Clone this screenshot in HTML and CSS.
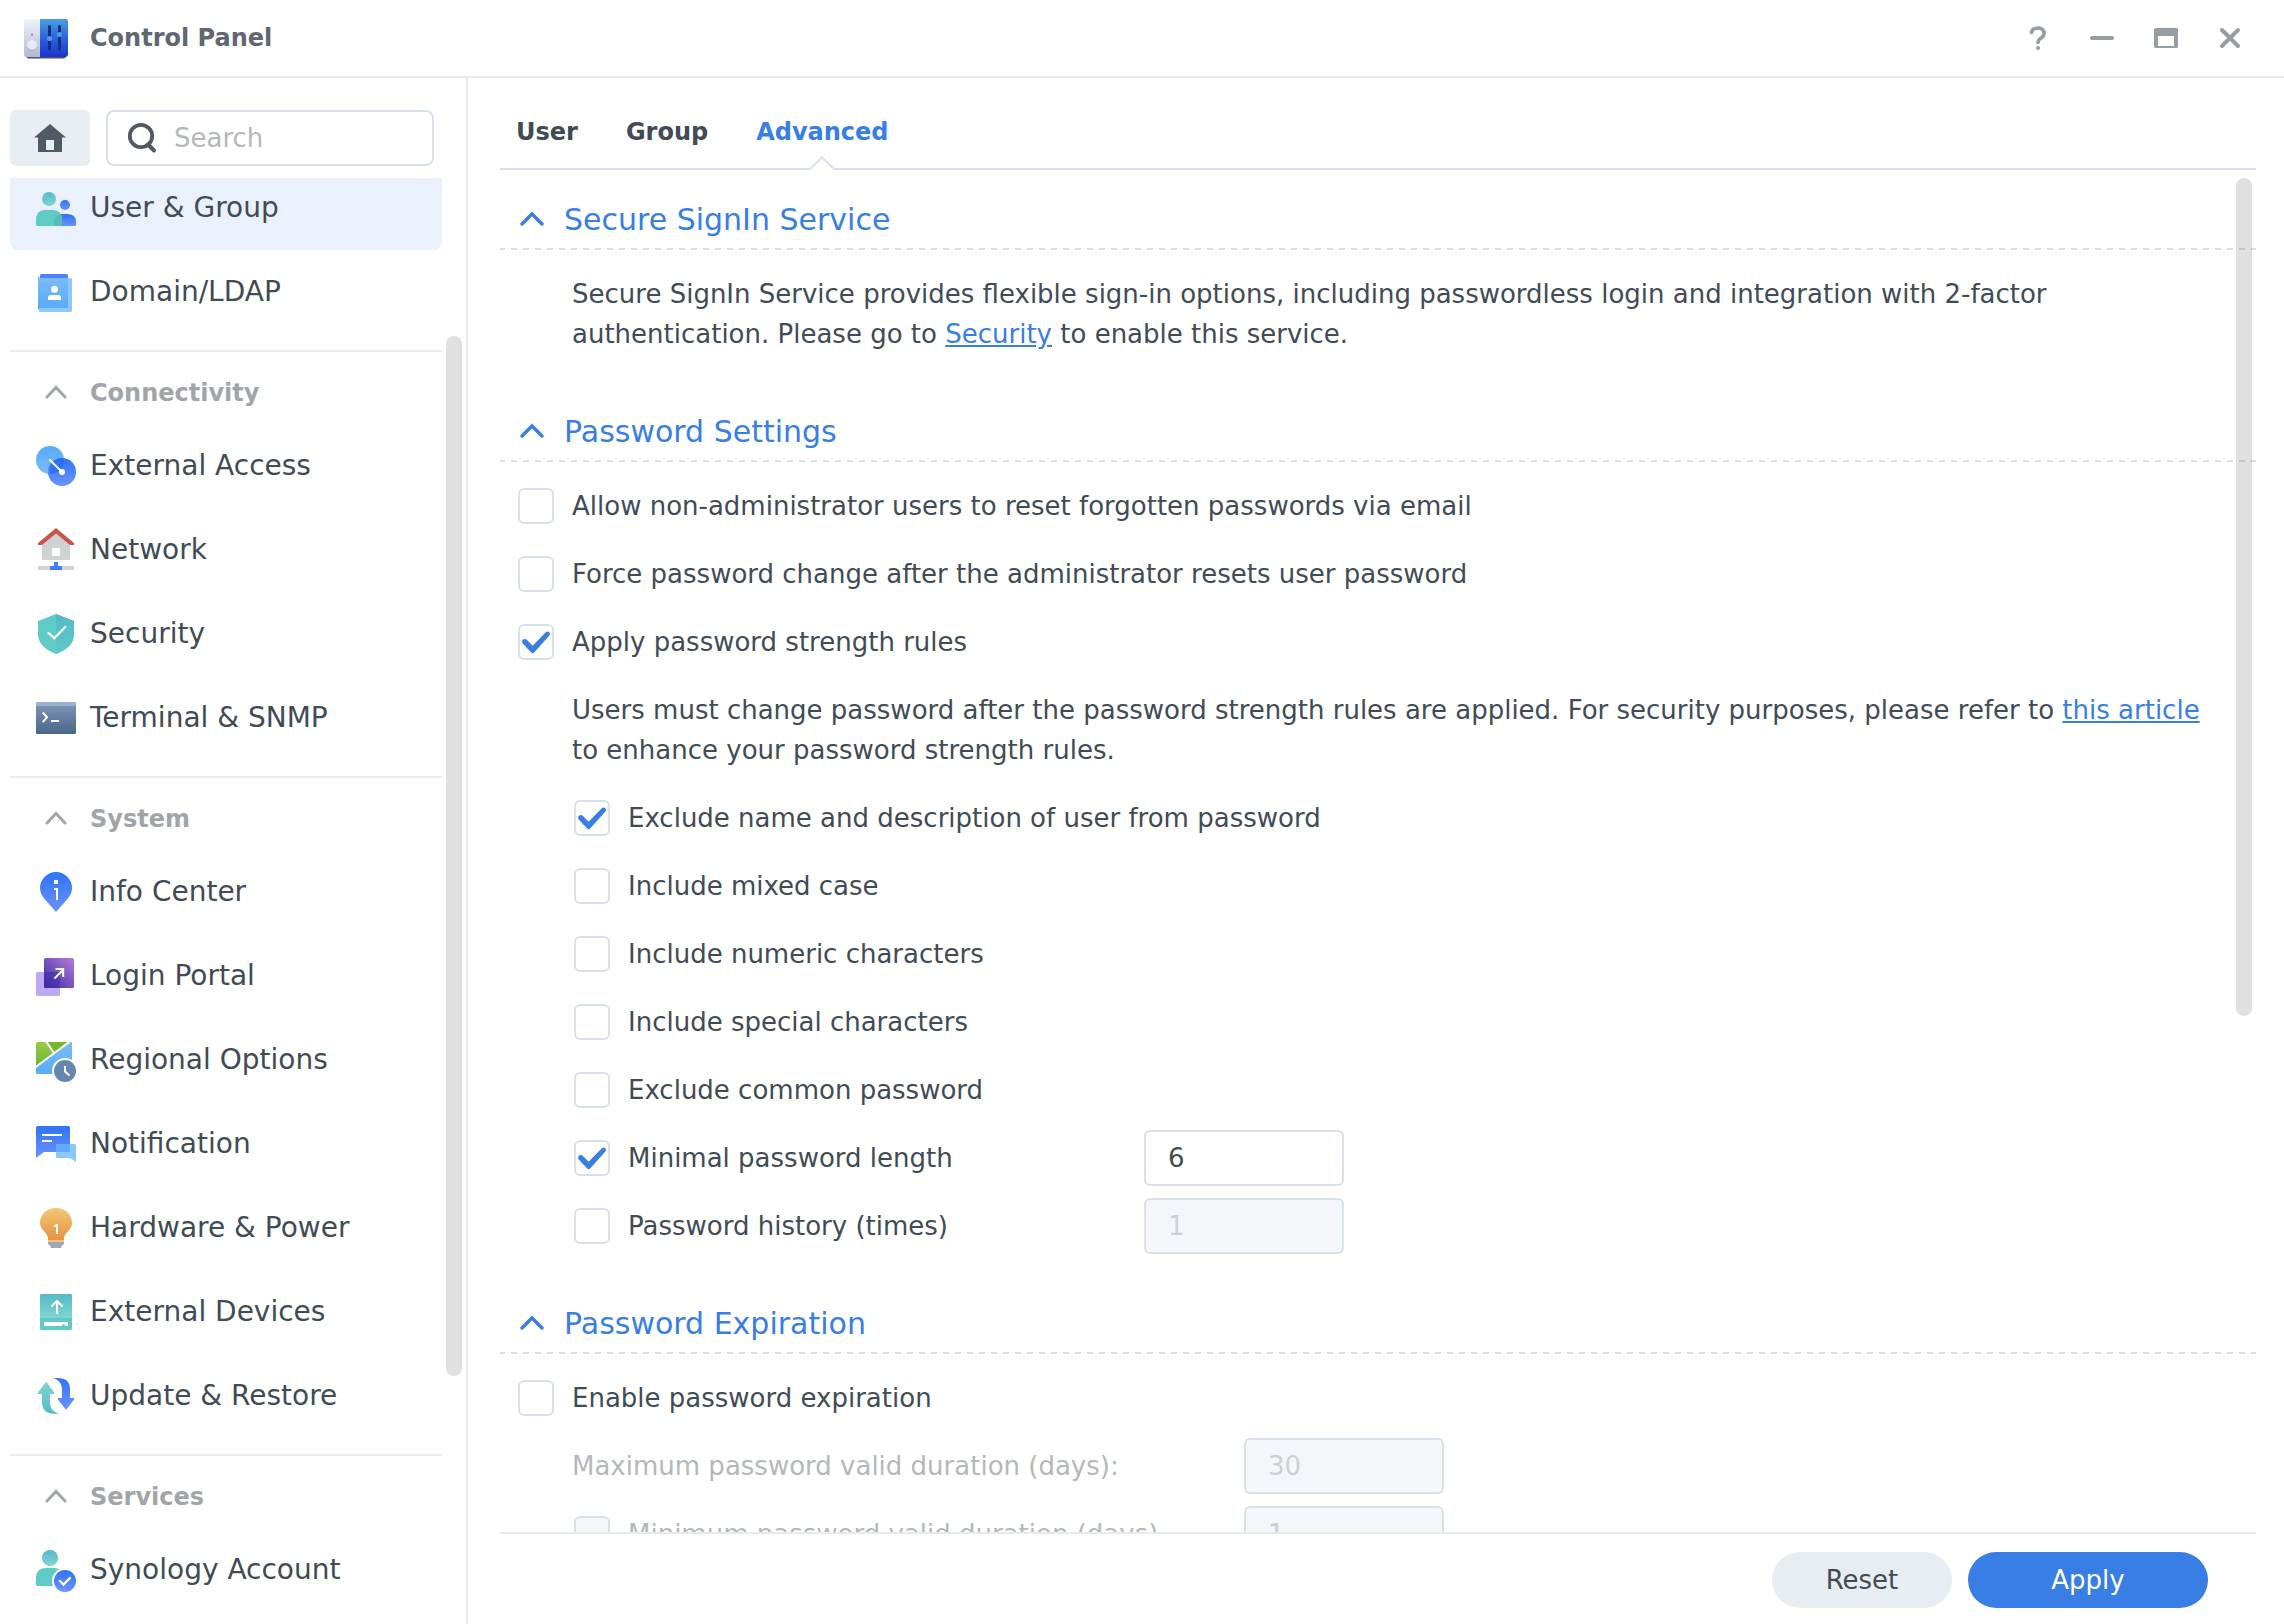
FILE: index.html
```
<!DOCTYPE html>
<html lang="en">
<head>
  <meta charset="UTF-8" />
  <meta name="viewport" content="width=device-width, initial-scale=1.0"/>
  <title>Control Panel</title>
  <link rel="stylesheet" href="styles.css">
</head>
<body>

  <!-- shared gradients -->
  <svg class="defs" aria-hidden="true">
    <defs>
      <linearGradient id="blue" x1="0" y1="0" x2="0" y2="1"><stop offset="0" stop-color="#2e74f8"/><stop offset="1" stop-color="#6b93ff"/></linearGradient>
      <linearGradient id="sky" x1="0" y1="0" x2="0" y2="1"><stop offset="0" stop-color="#7cbcf8"/><stop offset="1" stop-color="#56abf8"/></linearGradient>
      <linearGradient id="sky-up" x1="0" y1="0" x2="0" y2="1"><stop offset="0" stop-color="#56abf8"/><stop offset="1" stop-color="#7cbcf8"/></linearGradient>
      <linearGradient id="teal" x1="0" y1="0" x2="0" y2="1"><stop offset="0" stop-color="#55b9c9"/><stop offset="1" stop-color="#80d5d0"/></linearGradient>
      <linearGradient id="teal-up" x1="0" y1="0" x2="0" y2="1"><stop offset="0" stop-color="#80d5d0"/><stop offset="1" stop-color="#55b9c9"/></linearGradient>
      <linearGradient id="teal-half" x1="0" y1="0" x2="0" y2="1"><stop offset="0" stop-color="#55b9c9"/><stop offset="1" stop-color="#60cac6"/></linearGradient>
      <linearGradient id="slate" x1="0" y1="0" x2="0" y2="1"><stop offset="0" stop-color="#8197b9"/><stop offset="1" stop-color="#496689"/></linearGradient>
      <linearGradient id="purple" x1="0" y1="1" x2="1" y2="0"><stop offset="0" stop-color="#3c2ca0"/><stop offset="1" stop-color="#b57bd8"/></linearGradient>
      <linearGradient id="green" x1="0" y1="0" x2="0" y2="1"><stop offset="0" stop-color="#9acb45"/><stop offset="1" stop-color="#63b53a"/></linearGradient>
      <linearGradient id="orange" x1="0" y1="0" x2="0" y2="1"><stop offset="0" stop-color="#f0c774"/><stop offset="1" stop-color="#e98f3c"/></linearGradient>
      <linearGradient id="panel-white" x1="0" y1="0" x2="0" y2="1"><stop offset="0" stop-color="#f0f2fb"/><stop offset="1" stop-color="#b4b8d4"/></linearGradient>
      <linearGradient id="panel-blue" x1="0" y1="0" x2="0" y2="1"><stop offset="0" stop-color="#4a9ee4"/><stop offset=".4" stop-color="#2f6fdc"/><stop offset="1" stop-color="#1b33cf"/></linearGradient>
    </defs>
  </svg>

  <!-- title bar -->
  <header class="titlebar">
    <svg class="app-icon" viewBox="0 0 44 44" aria-hidden="true">
      <rect x="2" y="8" width="40" height="34.500" rx="3" fill="#4f5260"/>
      <path d="M2 3H16V41H3Q0 41 0 38V5Q0 3 2 3Z" fill="url(#panel-white)"/>
      <path d="M16 3H42Q44 3 44 5V38Q44 41 41 41H16Z" fill="url(#panel-blue)"/>
      <circle cx="8" cy="18.800" r="1" fill="#7d8496"/>
      <circle cx="8" cy="30" r="5" fill="#a3a6c3"/>
      <circle cx="8" cy="29" r="5" fill="#e7e9fa"/>
      <path d="M25.500 10.500V33M35.500 10.500V33" stroke="#152f7c" stroke-width="3" stroke-linecap="round"/>
      <circle cx="25.500" cy="22.500" r="2.600" fill="#4e97f2"/>
      <circle cx="35.500" cy="18.500" r="2.600" fill="#4e97f2"/>
    </svg>
    <h1>Control Panel</h1>
    <div class="window-tools">
      <button type="button" aria-label="Help"><svg viewBox="0 0 24 24"><path d="M5.500 6.500Q6.500 2 12 2Q18 2.300 18 7.500Q18 10.500 14.500 12.500Q12 14 12 16.500" fill="none" stroke="currentColor" stroke-width="3.600" stroke-linecap="round"/><circle cx="12" cy="22" r="2" fill="currentColor"/></svg></button>
      <button type="button" aria-label="Minimize"><svg viewBox="0 0 24 24"><rect y="10" width="24" height="4" rx="2" fill="currentColor"/></svg></button>
      <button type="button" aria-label="Maximize"><svg viewBox="0 0 24 24"><path d="M1.500 2H22.500Q24 2 24 3.500V20.500Q24 22 22.500 22H1.500Q0 22 0 20.500V3.500Q0 2 1.500 2ZM4 10V20H20V10Z" fill="currentColor" fill-rule="evenodd"/></svg></button>
      <button type="button" aria-label="Close"><svg viewBox="0 0 24 24"><path d="M4 4L20 20M20 4L4 20" stroke="currentColor" stroke-width="4" stroke-linecap="round"/></svg></button>
    </div>
  </header>

  <div class="window-body">

    <!-- sidebar -->
    <aside class="sidebar">
      <div class="sidebar-top">
        <button type="button" class="home-btn" aria-label="Home">
          <svg viewBox="0 0 32 32"><path d="M16 2L32 15.500H28V30H4V15.500H0ZM12 18V28H20V18Z" fill="currentColor" fill-rule="evenodd"/></svg>
        </button>
        <div class="search-box">
          <svg viewBox="0 0 32 32" aria-hidden="true"><circle cx="15" cy="14" r="11.200" fill="none" stroke="currentColor" stroke-width="3.800"/><path d="M22 22.500L28 28.500" stroke="currentColor" stroke-width="4" stroke-linecap="round"/></svg>
          <input type="text" placeholder="Search" aria-label="Search">
        </div>
      </div>

      <nav class="nav">
        <div class="nav-list">
          <a class="nav-item active" href="#">
            <svg viewBox="0 0 48 48"><circle cx="33" cy="21" r="5" fill="url(#blue)"/><path d="M22 30H36Q44 30.500 44 38V40.500Q44 42 42.500 42H22Z" fill="url(#blue)"/><circle cx="17" cy="15" r="7" fill="url(#teal)"/><path d="M4 36Q4 26 13 26H21Q30 26 30 36V42H5.500Q4 42 4 40.500Z" fill="#60cac6"/><path d="M30 42H22V38Q22 31 29 30Q30 32 30 36Z" fill="#58bbb9"/></svg>
            User &amp; Group
          </a>
          <a class="nav-item" href="#">
            <svg viewBox="0 0 48 48"><rect x="7" y="10" width="33" height="34" rx="1.500" fill="#90c8fb"/><rect x="8" y="6" width="28" height="6" rx="1.500" fill="#4a80fa"/><path d="M6 8L8 10H36V40H8L6 42Z" fill="url(#sky)"/><circle cx="22.500" cy="21.300" r="3.500" fill="#fff"/><path d="M16 32V30Q16 27 19 27H26Q29 27 29 30V32Z" fill="#fff"/></svg>
            Domain/LDAP
          </a>

          <div class="nav-group">
            <h2><svg viewBox="0 0 48 48"><path d="M15 28L24 18.500L33 28" fill="none" stroke="currentColor" stroke-width="3" stroke-linecap="round"/></svg>Connectivity</h2>
            <a class="nav-item" href="#">
              <svg viewBox="0 0 48 48"><circle cx="18" cy="18" r="14" fill="url(#sky-up)"/><circle cx="30" cy="30" r="14" fill="url(#blue)"/><path d="M32 18A14 14 0 0 1 18 32A14 14 0 0 1 30 16Q32 16 32 18Z" fill="#2668f0" opacity=".7"/><path d="M18 18L30 30" stroke="#fff" stroke-width="2" stroke-linecap="round"/><circle cx="30" cy="30" r="3" fill="#fff"/></svg>
              External Access
            </a>
            <a class="nav-item" href="#">
              <svg viewBox="0 0 48 48"><path d="M24 7L38 18V32.500Q38 34 36.500 34H11.500Q10 34 10 32.500V18ZM20 30H28V23Q28 22 27 22H21Q20 22 20 23Z" fill="#cfd1d4" fill-rule="evenodd"/><path d="M24 2L42 17V19H38L24 7.500L10 19H6V17Z" fill="#c6564c"/><path d="M6 40H42V44H6Z" fill="#d0d4d8"/><path d="M22 36H26V40H30V44H18V40H22Z" fill="#3f7df5"/></svg>
              Network
            </a>
            <a class="nav-item" href="#">
              <svg viewBox="0 0 48 48"><path d="M24 4L42 11V24Q42 37 24 44Q6 37 6 24V11Z" fill="#60cac6"/><path d="M24 4L42 11V24Q42 37 24 44Z" fill="url(#teal-half)"/><path d="M16.500 23L22.300 28.300L33.300 17" fill="none" stroke="#fff" stroke-width="2.200" stroke-linecap="round"/></svg>
              Security
            </a>
            <a class="nav-item" href="#">
              <svg viewBox="0 0 48 48"><rect x="4" y="8" width="40" height="32" rx="1.500" fill="url(#slate)"/><path d="M5.500 8H42.500Q44 8 44 9.500V12H4V9.500Q4 8 5.500 8Z" fill="#9cb0cf"/><path d="M10.700 18.500L15 23.300L10.700 28.200" fill="none" stroke="#fff" stroke-width="2"/><path d="M19 27H27" stroke="#fff" stroke-width="2"/></svg>
              Terminal &amp; SNMP
            </a>
          </div>

          <div class="nav-group">
            <h2><svg viewBox="0 0 48 48"><path d="M15 28L24 18.500L33 28" fill="none" stroke="currentColor" stroke-width="3" stroke-linecap="round"/></svg>System</h2>
            <a class="nav-item" href="#">
              <svg viewBox="0 0 48 48"><path d="M24 4A16 16 0 0 1 40 20Q40 26 35 31.500L24 44L13 31.500Q8 26 8 20A16 16 0 0 1 24 4Z" fill="url(#blue)"/><path d="M22 12H26V16H22ZM22 20H26V32H24V22H22Z" fill="#fff"/></svg>
              Info Center
            </a>
            <a class="nav-item" href="#">
              <svg viewBox="0 0 48 48"><rect x="4" y="20" width="24" height="24" rx="1.500" fill="#bfaaf2"/><rect x="12" y="6" width="30" height="30" rx="1.500" fill="url(#purple)"/><path d="M12 20H28V36H13Q12 36 12 35Z" fill="#3326a0" opacity=".4"/><path d="M22.500 26.500L31 18M23.500 17H31.200V25" fill="none" stroke="#fff" stroke-width="2"/></svg>
              Login Portal
            </a>
            <a class="nav-item" href="#">
              <svg viewBox="0 0 48 48"><path d="M5 6H40L4 32V7Z" fill="url(#green)"/><path d="M14 6H36L22 17Z" fill="#77b52f"/><path d="M40 6V38H5.500Q4 38 4 36.500V31Z" fill="url(#sky)"/><path d="M3 31.500L38.500 5M13.500 4.500L22 17" stroke="#fff" stroke-width="2"/><circle cx="33" cy="35" r="13" fill="#fff"/><circle cx="33" cy="35" r="11" fill="#6686af"/><path d="M33 30V35.500L37.500 39.500" fill="none" stroke="#fff" stroke-width="2"/></svg>
              Regional Options
            </a>
            <a class="nav-item" href="#">
              <svg viewBox="0 0 48 48"><path d="M5.500 6H36.500Q38 6 38 7.500V30.500Q38 32 36.500 32H12L4 38V7.500Q4 6 5.500 6Z" fill="url(#blue)"/><path d="M10 15H30M10 21H20" stroke="#fff" stroke-width="2"/><path d="M25.500 24H42.500Q44 24 44 25.500V42L38 38H25.500Q24 38 24 36.500V25.500Q24 24 25.500 24Z" fill="#8cc7fb"/><path d="M25.500 24H38V31Q38 32 37 32H24V25.500Q24 24 25.500 24Z" fill="#63abf8"/></svg>
              Notification
            </a>
            <a class="nav-item" href="#">
              <svg viewBox="0 0 48 48"><path d="M24 4C33 4 40 10.500 40 19C40 26 32 29 32 34V38H16V34C16 29 8 26 8 19C8 10.500 15 4 24 4Z" fill="url(#orange)"/><path d="M16 36H32V38H16Z" fill="#f2c283"/><path d="M16 38H32V40L29.500 42V44H18.500V42L16 40Z" fill="#9ea8b3"/><path d="M22 22L24 20H26V30H24V23H22Z" fill="#fff"/></svg>
              Hardware &amp; Power
            </a>
            <a class="nav-item" href="#">
              <svg viewBox="0 0 48 48"><rect x="8" y="6" width="32" height="36" rx="1.500" fill="#60cac6"/><path d="M9.500 6H38.500Q40 6 40 7.500V30H8V7.500Q8 6 9.500 6Z" fill="url(#teal)"/><path d="M12 34H36V38H33V36.500H30V38H12Z" fill="#fff"/><path d="M25 26V13.500M19.500 18.500L25 13L30.500 18.500" fill="none" stroke="#fff" stroke-width="2"/></svg>
              External Devices
            </a>
            <a class="nav-item" href="#">
              <svg viewBox="0 0 48 48"><path d="M14.300 9.500L22 20.500V22H18V31Q18.500 39 26.500 41.500Q10 43.500 10 30V22H6V20.500Z" fill="url(#teal-up)"/><path d="M21.500 6.300Q38 4.500 38 17V26H42V27.500L34 38L26 27.500V26H30V17Q29.500 8.500 21.500 6.300Z" fill="url(#blue)"/></svg>
              Update &amp; Restore
            </a>
          </div>

          <div class="nav-group">
            <h2><svg viewBox="0 0 48 48"><path d="M15 28L24 18.500L33 28" fill="none" stroke="currentColor" stroke-width="3" stroke-linecap="round"/></svg>Services</h2>
            <a class="nav-item" href="#">
              <svg viewBox="0 0 48 48"><circle cx="18" cy="12" r="8" fill="url(#teal)"/><path d="M4 32Q4 22 14 22H22Q30 22 32 30V40H5.500Q4 40 4 38.500Z" fill="#60cac6"/><circle cx="33" cy="35" r="13" fill="#fff"/><circle cx="33" cy="35" r="11" fill="url(#blue)"/><path d="M28 35L31.500 38.500L38 32" fill="none" stroke="#fff" stroke-width="2.400" stroke-linecap="round"/></svg>
              Synology Account
            </a>
          </div>
        </div>
        <div class="scrollbar nav-scroll"></div>
      </nav>
    </aside>

    <!-- main area -->
    <main class="main">
      <div class="tabs">
        <button type="button" class="tab">User</button>
        <button type="button" class="tab">Group</button>
        <button type="button" class="tab active">Advanced<svg viewBox="0 0 26 14" aria-hidden="true"><path d="M0 14L13 1L26 14Z" fill="#fff"/><path d="M0 13H1L13 1.500L25 13H26" fill="none" stroke="#d8e1e9" stroke-width="2"/></svg></button>
      </div>

      <form class="settings" id="settings">
        <section>
          <h3><svg viewBox="0 0 24 24"><path d="M2 16L12 6L22 16" fill="none" stroke="currentColor" stroke-width="3.400" stroke-linecap="round"/></svg>Secure SignIn Service</h3>
          <p class="desc">Secure SignIn Service provides flexible sign-in options, including passwordless login and integration with 2-factor authentication. Please go to <a href="#">Security</a> to enable this service.</p>
        </section>

        <section>
          <h3><svg viewBox="0 0 24 24"><path d="M2 16L12 6L22 16" fill="none" stroke="currentColor" stroke-width="3.400" stroke-linecap="round"/></svg>Password Settings</h3>
          <div class="row"><label><input type="checkbox">Allow non-administrator users to reset forgotten passwords via email</label></div>
          <div class="row"><label><input type="checkbox">Force password change after the administrator resets user password</label></div>
          <div class="row"><label><input type="checkbox" checked>Apply password strength rules</label></div>
          <p class="desc">Users must change password after the password strength rules are applied. For security purposes, please refer to <a href="#">this article</a> to enhance your password strength rules.</p>
          <div class="row sub"><label><input type="checkbox" checked>Exclude name and description of user from password</label></div>
          <div class="row sub"><label><input type="checkbox">Include mixed case</label></div>
          <div class="row sub"><label><input type="checkbox">Include numeric characters</label></div>
          <div class="row sub"><label><input type="checkbox">Include special characters</label></div>
          <div class="row sub"><label><input type="checkbox">Exclude common password</label></div>
          <div class="row sub">
            <label class="field-label"><input type="checkbox" checked>Minimal password length</label>
            <input type="text" class="field" value="6" aria-label="Minimal password length">
          </div>
          <div class="row sub">
            <label class="field-label"><input type="checkbox">Password history (times)</label>
            <input type="text" class="field" value="1" aria-label="Password history (times)" disabled>
          </div>
        </section>

        <section>
          <h3><svg viewBox="0 0 24 24"><path d="M2 16L12 6L22 16" fill="none" stroke="currentColor" stroke-width="3.400" stroke-linecap="round"/></svg>Password Expiration</h3>
          <div class="row"><label><input type="checkbox">Enable password expiration</label></div>
          <div class="row text disabled">
            <label class="field-label" for="max-days">Maximum password valid duration (days):</label>
            <input type="text" class="field" id="max-days" value="30" disabled>
          </div>
          <div class="row sub disabled">
            <label class="field-label wide"><input type="checkbox" disabled>Minimum password valid duration (days)</label>
            <input type="text" class="field" value="1" aria-label="Minimum password valid duration (days)" disabled>
          </div>
        </section>

        <div class="scrollbar main-scroll"></div>
      </form>

      <footer class="actions">
        <button type="reset" form="settings" class="btn btn-reset">Reset</button>
        <button type="submit" form="settings" class="btn btn-apply">Apply</button>
      </footer>
    </main>
  </div>

</body>
</html>
```

FILE: styles.css
```
* {
  box-sizing: border-box;
}

body {
  margin: 0;
  height: 100vh;
  display: flex;
  flex-direction: column;
  overflow: hidden;
  background: #fff;
  color: #414b55;
  font-family: Verdana, "DejaVu Sans", sans-serif;
  font-size: 26px;
  line-height: 40px;
}

button,
input {
  font: inherit;
  color: inherit;
}

button {
  padding: 0;
  border: none;
  background: none;
  cursor: pointer;
}

h1, h2, h3, p {
  margin: 0;
}

.defs {
  position: absolute;
  width: 0;
  height: 0;
}

/* title bar */
.titlebar {
  flex: none;
  display: flex;
  align-items: center;
  gap: 22px;
  height: 78px;
  padding: 0 22px 0 24px;
  border-bottom: 2px solid #e6ebf0;
}

.app-icon {
  width: 44px;
  height: 44px;
}

.titlebar h1 {
  flex: 1;
  font-size: 24px;
  color: #5f6871;
}

.window-tools {
  display: flex;
  color: #969da3;
}

.window-tools button {
  display: flex;
  justify-content: center;
  width: 64px;
}

.window-tools svg {
  width: 24px;
  height: 24px;
}

.window-body {
  flex: 1;
  min-height: 0;
  display: flex;
}

/* sidebar */
.sidebar {
  flex: none;
  width: 468px;
  display: flex;
  flex-direction: column;
  border-right: 2px solid #e6ebf0;
}

.sidebar-top {
  display: flex;
  gap: 16px;
  padding: 32px 32px 12px 10px;
}

.home-btn {
  display: flex;
  align-items: center;
  justify-content: center;
  width: 80px;
  height: 56px;
  border-radius: 6px;
  background: #e8edf1;
  color: #505a64;
}

.home-btn svg,
.search-box svg {
  flex: none;
  width: 32px;
  height: 32px;
}

.search-box {
  flex: 1;
  display: flex;
  align-items: center;
  gap: 16px;
  height: 56px;
  padding: 0 18px;
  border: 2px solid #d8e1e9;
  border-radius: 8px;
  color: #505a64;
}

.search-box input {
  width: 100%;
  padding: 0;
  border: none;
  outline: none;
  background: none;
}

.search-box input::placeholder {
  color: #b4b8bc;
  opacity: 1;
}

.nav {
  flex: 1;
  min-height: 0;
  position: relative;
  overflow: hidden;
}

/* list is scrolled a little, the first item is cut by the top edge */
.nav-list {
  margin-top: -12px;
  padding: 0 24px 0 10px;
}

.nav-item {
  display: flex;
  align-items: center;
  gap: 10px;
  height: 84px;
  padding-left: 22px;
  border-radius: 8px;
  color: #414b55;
  font-size: 28px;
  text-decoration: none;
  white-space: nowrap;
}

.nav-item svg,
.nav-group h2 svg {
  flex: none;
  width: 48px;
  height: 48px;
}

.nav-item.active {
  background: #eaf1fc;
}

.nav-group {
  margin-top: 16px;
  border-top: 2px solid #e8edf1;
}

.nav-group h2 {
  display: flex;
  align-items: center;
  gap: 10px;
  height: 72px;
  padding: 10px 0 0 22px;
  font-size: 24px;
  color: #a0a5aa;
}

.scrollbar {
  position: absolute;
  width: 16px;
  border-radius: 8px;
  background: rgba(0, 0, 0, 0.12);
}

.nav-scroll {
  top: 158px;
  right: 4px;
  height: 1040px;
}

/* main area */
.main {
  flex: 1;
  min-width: 0;
  display: flex;
  flex-direction: column;
  padding: 0 28px 0 32px;
}

.tabs {
  flex: none;
  display: flex;
  gap: 48px;
  height: 92px;
  padding-left: 16px;
  border-bottom: 2px solid #d8e1e9;
}

.tab {
  position: relative;
  padding-top: 18px;
  font-size: 24px;
  font-weight: bold;
}

.tab.active {
  color: #387ee4;
}

.tab svg {
  position: absolute;
  left: 50%;
  bottom: -2px;
  width: 26px;
  height: 14px;
  margin-left: -13px;
}

.settings {
  flex: 1;
  min-height: 0;
  position: relative;
  overflow: hidden;
  padding-top: 20px;
}

.settings section {
  margin-bottom: 34px;
}

.settings h3 {
  display: flex;
  align-items: center;
  gap: 20px;
  height: 60px;
  padding-left: 20px;
  margin-bottom: 10px;
  font-size: 30px;
  font-weight: normal;
  color: #387ee4;
  background: repeating-linear-gradient(90deg, #d8e1e9 0, #d8e1e9 5px, transparent 5px, transparent 11px, #d8e1e9 11px, #d8e1e9 12px) bottom / 100% 2px no-repeat;
}

.settings h3 svg {
  width: 24px;
  height: 24px;
}

.desc {
  padding: 14px 24px 14px 72px;
}

.desc a {
  color: #387ee4;
}

.row {
  display: flex;
  align-items: center;
  height: 68px;
  padding-left: 18px;
}

.row.text {
  padding-left: 72px;
}

.row.sub {
  padding-left: 74px;
}

.row label {
  display: flex;
  align-items: center;
}

.row .field-label {
  width: 570px;
}

.row .field-label.wide {
  width: 670px;
}

.row.text .field-label {
  width: 672px;
}

.row.disabled {
  color: #b4b8bc;
}

input[type="checkbox"] {
  appearance: none;
  width: 36px;
  height: 36px;
  margin: 0 18px 0 0;
  border: 2px solid #d8e1e9;
  border-radius: 6px;
  background: #fff;
}

/* tick mark */
input[type="checkbox"]:checked::before {
  content: "";
  display: block;
  width: 28px;
  height: 24px;
  margin: 4px 2px;
  background: #387ee4;
  clip-path: polygon(0 48%, 3% 40%, 10% 37%, 16% 40%, 38% 66%, 86% 8%, 93% 6%, 99% 11%, 100% 20%, 45% 92%, 38% 98%, 31% 92%, 2% 55%);
}

input[type="checkbox"]:disabled {
  background: #f4f6fa;
}

.field {
  width: 200px;
  height: 56px;
  padding: 0 22px;
  border: 2px solid #d8e1e9;
  border-radius: 6px;
  background: #fff;
}

.field:disabled {
  background: #f4f6fa;
  color: #c8d0d8;
}

.main-scroll {
  top: 8px;
  right: 4px;
  height: 838px;
}

.actions {
  flex: none;
  display: flex;
  justify-content: flex-end;
  gap: 16px;
  padding: 18px 48px 16px 0;
  border-top: 2px solid #e6ebf0;
}

.btn {
  width: 180px;
  height: 56px;
  border-radius: 28px;
}

.btn-reset {
  background: #e8edf1;
}

.btn-apply {
  width: 240px;
  background: #387ee4;
  color: #fff;
}
```
